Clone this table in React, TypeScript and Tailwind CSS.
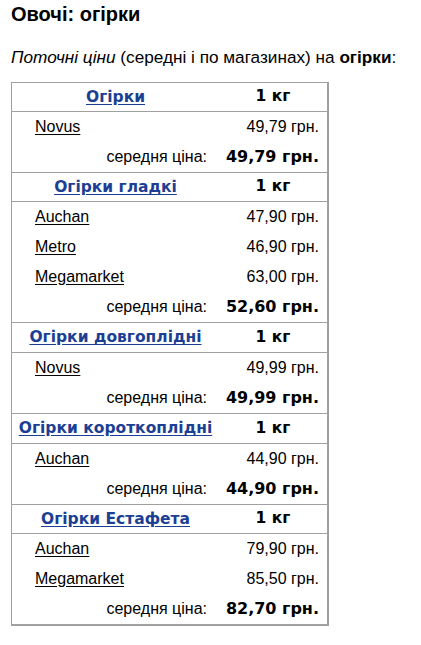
import React from "react";

type Store = { name: string; price: string };
type Group = { title: string; stores: Store[]; avg: string; tall?: boolean };

const groups: Group[] = [
  { title: "Огірки", stores: [{ name: "Novus", price: "49,79 грн." }], avg: "49,79 грн." },
  {
    title: "Огірки гладкі",
    stores: [
      { name: "Auchan", price: "47,90 грн." },
      { name: "Metro", price: "46,90 грн." },
      { name: "Megamarket", price: "63,00 грн." },
    ],
    avg: "52,60 грн.",
  },
  { title: "Огірки довгоплідні", stores: [{ name: "Novus", price: "49,99 грн." }], avg: "49,99 грн.", tall: true },
  { title: "Огірки короткоплідні", stores: [{ name: "Auchan", price: "44,90 грн." }], avg: "44,90 грн.", tall: true },
  {
    title: "Огірки Естафета",
    stores: [
      { name: "Auchan", price: "79,90 грн." },
      { name: "Megamarket", price: "85,50 грн." },
    ],
    avg: "82,70 грн.",
  },
];

const arial = "font-['Liberation_Sans',Arial,sans-serif]";
const verdana = "font-['DejaVu_Sans',Verdana,sans-serif]";

export default function App() {
  return (
    <div className={`bg-white min-h-[645px] w-[421px] text-black ${arial}`}>
      <div className="pl-[11px] pt-[2px]">
        <h1 className="text-[20px] leading-[24px] font-bold">Овочі: огірки</h1>
        <p className="mt-[21px] text-[17.2px] leading-[20px]">
          <i>Поточні ціни</i> (середні і по магазинах) на <b>огірки</b>:
        </p>
        <div className="mt-[15px] w-[318px] border-l border-t border-r-2 border-b-2 border-[#a0a0a0]">
          {groups.map((g, gi) => (
            <div key={gi} className={gi > 0 ? "border-t border-[#a0a0a0]" : ""}>
              <div
                className={`flex ${g.tall ? "h-[30px]" : "h-[29px]"} items-center border-b border-[#a0a0a0]`}
              >
                <div className="w-[207px] text-center">
                  <a className={`${verdana} text-[15.5px] font-bold text-[#1c3f94] underline underline-offset-2`} href="#">
                    {g.title}
                  </a>
                </div>
                <div className={`flex-1 text-center ${verdana} text-[15.5px] font-bold`}>1 кг</div>
              </div>
              {g.stores.map((s, si) => (
                <div key={si} className="flex h-[30px] items-center">
                  <div className="w-[207px] pl-[23px]">
                    <a className="text-[16px] underline underline-offset-2" href="#">
                      {s.name}
                    </a>
                  </div>
                  <div className="flex-1 text-right pr-[8px] text-[16px]">{s.price}</div>
                </div>
              ))}
              <div className="flex h-[30px] items-center">
                <div className="w-[207px] text-right pr-[12px] text-[16px]">середня ціна:</div>
                <div className={`flex-1 text-right pr-[8px] ${verdana} text-[16px] font-bold`}>{g.avg}</div>
              </div>
            </div>
          ))}
        </div>
      </div>
    </div>
  );
}
